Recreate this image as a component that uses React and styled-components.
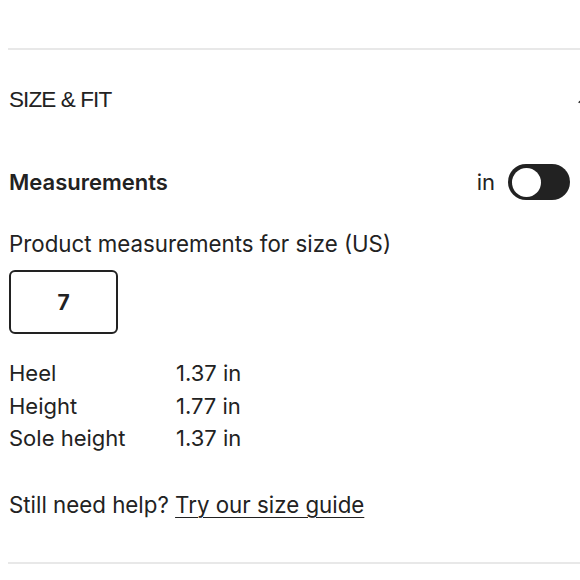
import React from 'react';
import styled, { createGlobalStyle } from 'styled-components';

const GlobalStyle = createGlobalStyle`
  html, body {
    margin: 0;
    padding: 0;
    background: #fff;
    overflow: hidden;
  }
  body {
    font-family: Inter, "Noto Sans", sans-serif;
    color: #222;
  }
`;

const Page = styled.div`
  width: 580px;
  height: 580px;
  overflow: hidden;
  padding: 48px 0 0 9px;
  box-sizing: border-box;
`;

const Divider = styled.hr`
  border: none;
  border-top: 2px solid #e8e8e8;
  margin: ${(p) => p.$top || 0}px -1px 0 -1px;
`;

const SectionHeader = styled.div`
  display: flex;
  align-items: center;
  justify-content: space-between;
  height: 100px;
  margin-right: -17px;
`;

const SectionTitle = styled.h2`
  margin: 0;
  font-family: "Liberation Sans", Arial, sans-serif;
  font-weight: 400;
  font-size: 22.5px;
  letter-spacing: -0.9px;
  color: #222;
`;

const Chevron = styled.svg`
  width: 22px;
  height: 22px;
  flex-shrink: 0;
`;

const MeasureRow = styled.div`
  display: flex;
  align-items: center;
  justify-content: space-between;
  margin-top: 14px;
  padding-right: 10px;
`;

const MeasureTitle = styled.div`
  font-size: 22px;
  font-weight: 600;
`;

const UnitToggle = styled.label`
  display: flex;
  align-items: center;
  gap: 13px;
  font-size: 22px;
`;

const Track = styled.span`
  width: 62px;
  height: 36px;
  border-radius: 18px;
  background: #222;
  display: flex;
  align-items: center;
  padding: 0 4px;
  box-sizing: border-box;
  justify-content: ${(p) => (p.$on ? 'flex-end' : 'flex-start')};
`;

const Knob = styled.span`
  width: 29px;
  height: 29px;
  border-radius: 50%;
  background: #fff;
`;

const Caption = styled.p`
  margin: 31px 0 0;
  font-size: 22.3px;
  line-height: 26px;
`;

const SizeBox = styled.div`
  margin-top: 13px;
  width: 109px;
  height: 64px;
  border: 2px solid #222;
  border-radius: 6px;
  box-sizing: border-box;
  display: flex;
  align-items: center;
  justify-content: center;
  font-size: 21px;
  font-weight: 700;
`;

const Table = styled.div`
  margin-top: 23px;
  display: grid;
  grid-template-columns: 167px auto;
  font-size: 22px;
  line-height: 32.5px;
`;

const Help = styled.p`
  margin: 36px 0 0;
  font-size: 22.3px;
  line-height: 28px;
`;

const Link = styled.a`
  color: #222;
  text-decoration: underline;
  text-underline-offset: 4px;
  text-decoration-thickness: 1px;
`;

const rows = [
  ['Heel', '1.37 in'],
  ['Height', '1.77 in'],
  ['Sole height', '1.37 in'],
];

export default function App() {
  return (
    <>
      <GlobalStyle />
      <Page>
        <Divider />
        <SectionHeader>
          <SectionTitle>SIZE &amp; FIT</SectionTitle>
          <Chevron viewBox="0 0 24 24" fill="none" stroke="#222" strokeWidth="1.5">
            <path d="M4 15l8-8 8 8" />
          </Chevron>
        </SectionHeader>
        <MeasureRow>
          <MeasureTitle>Measurements</MeasureTitle>
          <UnitToggle>
            in
            <Track>
              <Knob />
            </Track>
          </UnitToggle>
        </MeasureRow>
        <Caption>Product measurements for size (US)</Caption>
        <SizeBox>7</SizeBox>
        <Table>
          {rows.map(([k, v]) => (
            <React.Fragment key={k}>
              <span>{k}</span>
              <span>{v}</span>
            </React.Fragment>
          ))}
        </Table>
        <Help>
          Still need help? <Link href="#">Try our size guide</Link>
        </Help>
        <Divider $top={43} />
      </Page>
    </>
  );
}
